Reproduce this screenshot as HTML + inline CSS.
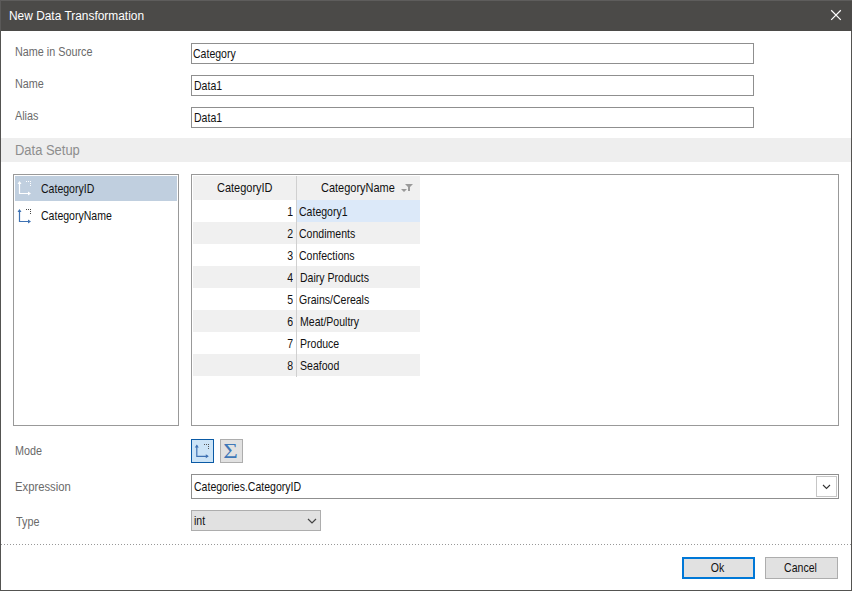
<!DOCTYPE html>
<html>
<head>
<meta charset="utf-8">
<title>New Data Transformation</title>
<style>
html,body{margin:0;padding:0;}
body{width:852px;height:591px;overflow:hidden;background:#fff;position:relative;font-family:"Liberation Sans",sans-serif;}
.abs{position:absolute;box-sizing:border-box;}
#win{left:0;top:0;width:852px;height:591px;border:1px solid #545351;border-top:none;background:#fff;}
#title{left:0;top:0;width:852px;height:31px;background:#4b4a48;border-top:1px solid #5e5d5c;border-left:1px solid #5a5958;}
#title span{position:absolute;left:8px;top:7px;font-size:12.5px;line-height:16px;color:#fff;transform:translateY(0.4px) scaleX(0.953);transform-origin:0 50%;white-space:nowrap;}
.lbl{font-size:12px;line-height:14px;color:#6a6a6a;white-space:nowrap;transform:scaleX(0.9);transform-origin:0 50%;}
.tb{border:1px solid #8f8f8f;background:#fff;}
.txt{font-size:12.7px;line-height:14px;color:#111;white-space:nowrap;transform:scaleX(0.83);transform-origin:0 50%;}
.txt.num{transform-origin:100% 50%;}
.txt.ctr{transform-origin:50% 50%;}
.txt.hd{transform:scaleX(0.865);}
#band{left:1px;top:138px;width:850px;height:24px;background:#eeeeee;}
#band span{position:absolute;left:14px;top:3px;font-size:14px;line-height:18px;color:#8d8d8d;transform:scaleX(0.925);transform-origin:0 50%;}
.box{border:1px solid #999;background:#fff;}
.row{left:193px;width:227px;height:22px;}
.g{background:#f0f0f0;}
.num{left:193px;width:100px;text-align:right;}
</style>
</head>
<body>
<div id="win" class="abs"></div>
<div id="title" class="abs"><span>New Data Transformation</span>
<svg class="abs" style="left:829px;top:8px" width="13" height="13" viewBox="0 0 13 13"><path d="M1.2 1.25 L10.8 10.85 M10.8 1.25 L1.2 10.85" stroke="#fff" stroke-width="1.2" fill="none"/></svg>
</div>

<div class="abs lbl" style="left:14.5px;top:45px">Name in Source</div>
<div class="abs lbl" style="left:14.5px;top:77px">Name</div>
<div class="abs lbl" style="left:14.5px;top:109px">Alias</div>

<div class="abs tb" style="left:191px;top:43px;width:563px;height:21px"></div>
<div class="abs tb" style="left:191px;top:75px;width:563px;height:21px"></div>
<div class="abs tb" style="left:191px;top:107px;width:563px;height:21px"></div>
<div class="abs txt" style="left:193px;top:47px">Category</div>
<div class="abs txt" style="left:194px;top:79px">Data1</div>
<div class="abs txt" style="left:194px;top:111px">Data1</div>

<div id="band" class="abs"><span>Data Setup</span></div>

<!-- left list -->
<div class="abs box" style="left:13px;top:174px;width:166px;height:252px"></div>
<div class="abs" style="left:15px;top:176px;width:162px;height:25px;background:#c0cfdf"></div>
<svg class="abs" style="left:16px;top:180px" width="16" height="16" viewBox="0 0 16 16">
<path d="M3.5 2 V13.5 H14" stroke="#fff" stroke-width="1.2" fill="none"/>
<path d="M3.5 1 L5.5 4 H1.5 Z M15 13.5 L12 11.5 V15.5 Z" fill="#fff"/>
<path d="M10 1.5h1M12 1.5h1M14 1.5h1M14 3.5h1M14 5.5h1" stroke="#fff" stroke-width="1"/>
</svg>
<svg class="abs" style="left:16px;top:208px" width="16" height="16" viewBox="0 0 16 16">
<path d="M3.5 2 V13.5 H14" stroke="#3f72b3" stroke-width="1.2" fill="none"/>
<path d="M3.5 1 L5.5 4 H1.5 Z M15 13.5 L12 11.5 V15.5 Z" fill="#3f72b3"/>
<path d="M10 1.5h1M12 1.5h1M14 1.5h1M14 3.5h1M14 5.5h1" stroke="#444" stroke-width="1"/>
</svg>
<div class="abs txt" style="left:41px;top:182px">CategoryID</div>
<div class="abs txt" style="left:41px;top:209px">CategoryName</div>

<!-- grid -->
<div class="abs box" style="left:191px;top:174px;width:648px;height:252px"></div>
<div class="abs g" style="left:193px;top:176px;width:227px;height:24px"></div>
<div class="abs row g" style="top:222px"></div>
<div class="abs row g" style="top:266px"></div>
<div class="abs row g" style="top:310px"></div>
<div class="abs row g" style="top:354px"></div>
<div class="abs" style="left:297px;top:200px;width:123px;height:22px;background:#dce9f9"></div>
<div class="abs" style="left:296px;top:176px;width:1px;height:201px;background:#d0d0d0"></div>
<div class="abs txt hd" style="left:217px;top:181px">CategoryID</div>
<div class="abs txt hd" style="left:321px;top:181px">CategoryName</div>
<svg class="abs" style="left:400px;top:183px" width="14" height="10" viewBox="0 0 14 10"><path d="M5 1 H13 L10 4 V8 H8 V4 Z M1 6 H7 L4 9 Z" fill="#9a9a9a"/></svg>

<div class="abs txt num" style="top:205px">1</div>
<div class="abs txt num" style="top:227px">2</div>
<div class="abs txt num" style="top:249px">3</div>
<div class="abs txt num" style="top:271px">4</div>
<div class="abs txt num" style="top:293px">5</div>
<div class="abs txt num" style="top:315px">6</div>
<div class="abs txt num" style="top:337px">7</div>
<div class="abs txt num" style="top:359px">8</div>
<div class="abs txt" style="left:299px;top:205px">Category1</div>
<div class="abs txt" style="left:299px;top:227px">Condiments</div>
<div class="abs txt" style="left:299px;top:249px">Confections</div>
<div class="abs txt" style="left:300px;top:271px">Dairy Products</div>
<div class="abs txt" style="left:299px;top:293px">Grains/Cereals</div>
<div class="abs txt" style="left:300px;top:315px">Meat/Poultry</div>
<div class="abs txt" style="left:300px;top:337px">Produce</div>
<div class="abs txt" style="left:300px;top:359px">Seafood</div>

<!-- mode -->
<div class="abs lbl" style="left:14.8px;top:444px">Mode</div>
<div class="abs" style="left:191px;top:439px;width:23px;height:24px;border:1px solid #0a5aa5;background:#cce4f7"></div>
<svg class="abs" style="left:194px;top:443px" width="16" height="16" viewBox="0 0 16 16">
<path d="M2.8 2.5 V13.3 H14" stroke="#3f72b3" stroke-width="1.2" fill="none"/>
<path d="M2.8 1.4 L4.8 4.4 H0.8 Z M14.8 13.3 L11.8 11.3 V15.3 Z" fill="#3f72b3"/>
<path d="M10 1.5h1M12 1.5h1M14 1.5h1M14 3.5h1M14 5.5h1" stroke="#555" stroke-width="1"/>
</svg>
<div class="abs" style="left:220px;top:439px;width:23px;height:24px;border:1px solid #adadad;background:#e1e1e1"></div>
<div class="abs" style="left:220px;top:439px;width:23px;height:24px;text-align:center;font-family:'Liberation Serif',serif;font-size:20px;line-height:23px;color:#3f78b8;transform:translate(-1px,1px) scaleX(1.25)">Σ</div>

<!-- expression -->
<div class="abs lbl" style="left:14.8px;top:480px;transform:scaleX(0.94)">Expression</div>
<div class="abs tb" style="left:191px;top:474px;width:648px;height:25px"></div>
<div class="abs" style="left:816px;top:476px;width:21px;height:21px;border:1px solid #c6c6c6;background:#fff"></div>
<svg class="abs" style="left:821px;top:482px" width="12" height="10" viewBox="0 0 12 10"><path d="M2 3 L5.5 6.5 L9 3" stroke="#333" stroke-width="1.1" fill="none"/></svg>
<div class="abs txt" style="left:194px;top:480px">Categories.CategoryID</div>

<!-- type -->
<div class="abs lbl" style="left:16px;top:515px">Type</div>
<div class="abs" style="left:191px;top:510px;width:130px;height:21px;border:1px solid #adadad;background:#e1e1e1"></div>
<div class="abs txt" style="left:194px;top:514px">int</div>
<svg class="abs" style="left:306px;top:516px" width="12" height="10" viewBox="0 0 12 10"><path d="M2 3 L6 7 L10 3" stroke="#444" stroke-width="1.2" fill="none"/></svg>

<!-- dotted separator -->
<div class="abs" style="left:1px;top:544px;width:850px;height:1px;background:repeating-linear-gradient(90deg,#989898 0,#989898 1px,transparent 1px,transparent 3px)"></div>

<!-- buttons -->
<div class="abs" style="left:682px;top:557px;width:73px;height:22px;border:2px solid #0078d7;background:#e1e1e1"></div>
<div class="abs txt ctr" style="left:680.5px;top:561px;width:73px;text-align:center">Ok</div>
<div class="abs" style="left:765px;top:557px;width:73px;height:22px;border:1px solid #adadad;background:#e1e1e1"></div>
<div class="abs txt ctr" style="left:763.5px;top:561px;width:73px;text-align:center">Cancel</div>
</body>
</html>
